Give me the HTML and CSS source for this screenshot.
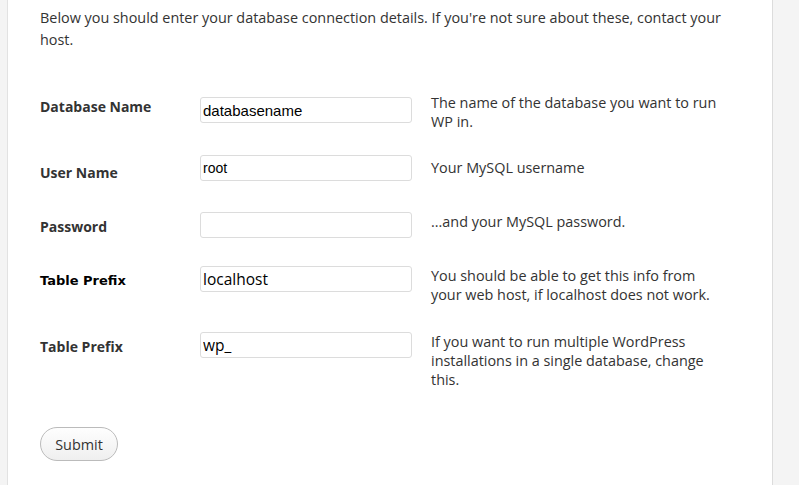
FILE: index.html
```html
<!DOCTYPE html>
<html lang="en">
<head>
  <meta charset="UTF-8">
  <title>WordPress &rsaquo; Setup Configuration File</title>
  <link rel="stylesheet" href="styles.css">
</head>
<body>
  <div class="panel">
    <p class="intro">Below you should enter your database connection details. If you're not sure about these, contact your host.</p>

    <form class="form-table">
      <label class="label label-first" for="dbname">Database Name</label>
      <input class="field" id="dbname" type="text" value="databasename">
      <p class="help help-first">The name of the database you want to run WP in.</p>

      <label class="label label-second" for="uname">User Name</label>
      <input class="field field-small" id="uname" type="text" value="root">
      <p class="help help-second">Your MySQL username</p>

      <label class="label" for="pwd">Password</label>
      <input class="field" id="pwd" type="text" value="">
      <p class="help">...and your MySQL password.</p>

      <label class="label label-dark" for="dbhost">Table Prefix</label>
      <input class="field field-large" id="dbhost" type="text" value="localhost">
      <p class="help">You should be able to get this info from your web host, if localhost does not work.</p>

      <label class="label" for="prefix">Table Prefix</label>
      <input class="field field-large" id="prefix" type="text" value="wp_">
      <p class="help">If you want to run multiple WordPress installations in a single database, change this.</p>
    </form>

    <button class="button" type="submit">Submit</button>
  </div>
</body>
</html>
```

FILE: styles.css
```css
* {
  box-sizing: border-box;
}
body {
  margin: 0;
  background: #f4f4f4;
  font-family: "Open Sans", "Noto Sans", sans-serif;
  font-size: 14.4px;
  color: #333;
}
.panel {
  margin-left: 7px;
  width: 766px;
  min-height: 100vh;
  background: #fff;
  border-left: 1px solid #e2e2e2;
  border-right: 1px solid #dcdcdc;
  padding: 7px 32px 24px;
}
.intro {
  margin: 0;
  line-height: 22px;
  width: 700px;
}
.form-table {
  display: grid;
  grid-template-columns: 160px 212px 310px;
  grid-template-rows: 58px 57px 54px 66px auto;
  margin-top: 46px;
}
.label {
  font-size: 14px;
  font-weight: bold;
  line-height: 20px;
  padding-top: 5px;
}
.label-first {
  padding-top: 0;
}
.label-second {
  padding-top: 8px;
}
.label-dark {
  color: #000;
  font-family: "DejaVu Sans", sans-serif;
  font-size: 13px;
}
.field {
  height: 26px;
  width: 212px;
  border: 1px solid #dcdcdc;
  border-radius: 3px;
  padding: 0 2px;
  font-family: "Liberation Sans", Arial, sans-serif;
  font-size: 15px;
  color: #000;
  background: #fff;
}
.field-small {
  font-size: 14px;
}
.field-large {
  font-family: "Open Sans", sans-serif;
  font-size: 15.5px;
}
.help {
  margin: 0 0 0 19px;
  line-height: 19px;
}
.help-first {
  margin-top: -4px;
}
.help-second {
  margin-top: 3px;
}
.button {
  margin-top: 38px;
  width: 78px;
  height: 34px;
  border: 1px solid #bbb;
  border-radius: 17px;
  background: linear-gradient(#fefefe, #efefef);
  font-family: inherit;
  font-size: 14.4px;
  color: #333;
  cursor: pointer;
}
```
